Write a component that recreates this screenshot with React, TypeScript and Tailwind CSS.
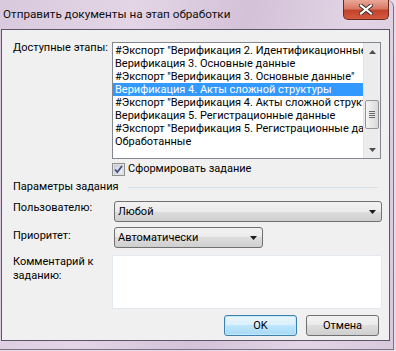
import React from "react"

const stages = [
  '#Экспорт "Верификация 2. Идентификационные данные"',
  "Верификация 3. Основные данные",
  '#Экспорт "Верификация 3. Основные данные"',
  "Верификация 4. Акты сложной структуры",
  '#Экспорт "Верификация 4. Акты сложной структуры"',
  "Верификация 5. Регистрационные данные",
  '#Экспорт "Верификация 5. Регистрационные данные"',
  "Обработанные",
]

const ArrowDown = () => (
  <svg width="7" height="4" viewBox="0 0 7 4">
    <path d="M0 0 H7 L3.5 4 Z" fill="#1a1a1a" />
  </svg>
)

const ScrollBar = () => (
  <div className="w-[17px] h-full flex flex-col bg-[#ececec] border-l border-[#e3e3e3]">
    <div className="h-[17px] flex items-center justify-center">
      <svg width="7" height="4" viewBox="0 0 7 4">
        <path d="M0 4 H7 L3.5 0 Z" fill="#4d4d4d" />
      </svg>
    </div>
    <div className="flex-1 flex flex-col px-[1px]">
      <div className="h-[40px]" />
      <div className="h-[29px] rounded-[2px] border border-[#959595] bg-gradient-to-r from-[#f4f4f4] to-[#d9d9d9] flex flex-col items-center justify-center gap-[1px]">
        <div className="w-[6px] h-px bg-[#6b6b6b]" />
        <div className="w-[6px] h-px bg-[#6b6b6b]" />
        <div className="w-[6px] h-px bg-[#6b6b6b]" />
        <div className="w-[6px] h-px bg-[#6b6b6b]" />
      </div>
    </div>
    <div className="h-[17px] flex items-center justify-center">
      <svg width="7" height="4" viewBox="0 0 7 4">
        <path d="M0 0 H7 L3.5 4 Z" fill="#4d4d4d" />
      </svg>
    </div>
  </div>
)

const Combo = ({ value, width }: { value: string; width: string }) => (
  <div
    className={`${width} h-[21px] rounded-[3px] border border-[#707070] bg-[linear-gradient(#f2f2f2_0%,#ebebeb_50%,#dddddd_50%,#cfcfcf_100%)] flex items-center justify-between pl-[3px] pr-[5px]`}
  >
    <span className="leading-[16px]">{value}</span>
    <ArrowDown />
  </div>
)

const Button = ({ label, primary }: { label: string; primary?: boolean }) => (
  <div
    className={
      primary
        ? "w-[73px] h-[21px] rounded-[3px] border border-[#3c7fb1] bg-[linear-gradient(#eaf6fd_0%,#d9f0fc_50%,#bee6fd_50%,#a7d9f5_100%)] flex items-center justify-center leading-[16px] shadow-[inset_0_0_0_1px_#c5e7fa]"
        : "w-[73px] h-[21px] rounded-[3px] border border-[#707070] bg-[linear-gradient(#f2f2f2_0%,#ebebeb_50%,#dddddd_50%,#cfcfcf_100%)] flex items-center justify-center leading-[16px]"
    }
  >
    {label}
  </div>
)

export default function App() {
  return (
    <div className="w-[396px] h-[351px] overflow-hidden bg-[#e6dce8] font-['Roboto',sans-serif] text-[11px] text-black">
      <div className="relative w-[394px] h-[350px] rounded-tr-[7px] border-r border-b border-[#7d7186] bg-[linear-gradient(100deg,#d9c9dd_0%,#e3d5e6_30%,#d4c2d8_55%,#e2d4e5_80%,#d9c8dc_100%)]">
        {/* title bar */}
        <div className="h-[29px] flex items-center pl-[3px] pb-[1px]">
          <span className="leading-[16px] text-[11.7px] text-[#101010]">Отправить документы на этап обработки</span>
        </div>
        <div className="absolute left-[343px] top-0 w-[46px] h-[20px] rounded-b-[5px] border border-t-0 border-[#6b2a20] bg-[linear-gradient(#e9a898_0%,#d87a66_45%,#c4432b_55%,#d25a40_100%)] flex items-center justify-center">
          <svg width="14" height="11" viewBox="0 0 14 11">
            <path d="M2 1.5 L12 9.5 M12 1.5 L2 9.5" stroke="#3b2a2a" strokeWidth="4" strokeLinecap="square" />
            <path d="M2 1.5 L12 9.5 M12 1.5 L2 9.5" stroke="#ffffff" strokeWidth="2.2" strokeLinecap="square" />
          </svg>
        </div>

        {/* client area */}
        <div className="ml-[1px] w-[389px] h-[312px] border border-[#5b5569] bg-[#f0f0f0] pl-[11px] pt-[10px]">
          <div className="flex items-start">
            <div className="w-[99px] leading-[16px] whitespace-nowrap">Доступные этапы:</div>
            <div className="mt-[2px] w-[269px] h-[117px] border border-[#828790] bg-white flex">
              <div className="flex-1 overflow-hidden pt-[1px]">
                {stages.map((s, i) => (
                  <div
                    key={i}
                    className={
                      i === 3
                        ? "h-[13px] leading-[13px] pl-[2px] whitespace-nowrap bg-[#3399ff] text-white"
                        : "h-[13px] leading-[13px] pl-[2px] whitespace-nowrap"
                    }
                  >
                    {s}
                  </div>
                ))}
              </div>
              <ScrollBar />
            </div>
          </div>

          <div className="ml-[99px] mt-[3px] flex items-center gap-[3px] h-[14px]">
            <svg width="13" height="13" viewBox="0 0 13 13">
              <defs>
                <linearGradient id="cb" x1="0" y1="0" x2="1" y2="1">
                  <stop offset="0" stopColor="#cbcfd5" />
                  <stop offset="1" stopColor="#f7f7f7" />
                </linearGradient>
              </defs>
              <rect x="0.5" y="0.5" width="12" height="12" fill="#f4f4f4" stroke="#8e8f8f" />
              <rect x="2" y="2" width="9" height="9" fill="url(#cb)" stroke="#b6b9bf" strokeWidth="0.6" />
              <path d="M3 6.5 L5.3 9 L10 3" fill="none" stroke="#3c4f87" strokeWidth="1.8" />
            </svg>
            <span className="leading-[16px]">Сформировать задание</span>
          </div>

          <div className="mt-[3px] flex items-center pr-[11px]">
            <span className="leading-[16px]">Параметры задания</span>
            <div className="ml-[9px] flex-1 h-px bg-[#d5dfe5]" />
          </div>

          <div className="mt-[5px] flex items-start">
            <div className="w-[101px] leading-[16px]">Пользователю:</div>
            <div className="mt-[1px]">
              <Combo value="Любой" width="w-[268px]" />
            </div>
          </div>

          <div className="mt-[4px] flex items-start">
            <div className="w-[101px] leading-[16px] mt-[2px]">Приоритет:</div>
            <div className="mt-[1px]">
              <Combo value="Автоматически" width="w-[149px]" />
            </div>
          </div>

          <div className="mt-[7px] flex items-start">
            <div className="w-[99px] leading-[14px]">
              Комментарий к<br />заданию:
            </div>
            <div className="w-[270px] h-[54px] border border-[#e3e9ef] bg-white" />
          </div>

          <div className="mt-[6px] flex justify-end gap-[9px] pr-[10px]">
            <Button label="OK" primary />
            <Button label="Отмена" />
          </div>
        </div>
      </div>
    </div>
  )
}
